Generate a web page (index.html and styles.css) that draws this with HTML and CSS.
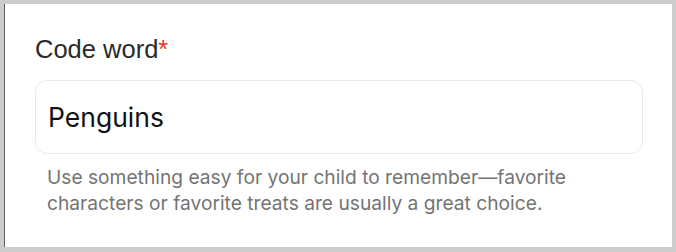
FILE: index.html
```html
<!DOCTYPE html>
<html lang="en">
<head>
<meta charset="utf-8">
<title>Code word</title>
<link rel="stylesheet" href="styles.css">
</head>
<body>
  <div class="card">
    <label class="label" for="code">Code word<span class="req">*</span></label>
    <input class="field" id="code" type="text" value="Penguins">
    <p class="help">Use something easy for your child to remember—favorite characters or favorite treats are usually a great choice.</p>
  </div>
</body>
</html>
```

FILE: styles.css
```css
html, body {
  margin: 0;
  padding: 0;
}
body {
  background: #cccccc;
  padding: 4px 4px 5px 4px;
  width: 676px;
  height: 252px;
  box-sizing: border-box;
}
.card {
  background: #ffffff;
  border-left: 1px solid #5e5e5e;
  height: 243px;
  box-sizing: border-box;
  padding: 31px 29px 0 30px;
  display: flex;
  flex-direction: column;
}
.label {
  font-family: "Liberation Sans", Arial, sans-serif;
  font-size: 25.5px;
  line-height: 29px;
  color: #2a2a2a;
}
.req {
  color: #e8322f;
}
.field {
  margin-top: 16px;
  height: 74px;
  box-sizing: border-box;
  border: 1px solid #e6e9ee;
  border-radius: 12px;
  padding: 0 12px;
  font-family: Inter, "Noto Sans", sans-serif;
  font-size: 26.5px;
  color: #111111;
  background: #ffffff;
  outline: none;
  width: 100%;
}
.help {
  margin: 10px 0 0 0;
  padding-left: 12px;
  font-family: Inter, "Noto Sans", sans-serif;
  font-size: 19.2px;
  line-height: 26px;
  color: #747474;
}
```
